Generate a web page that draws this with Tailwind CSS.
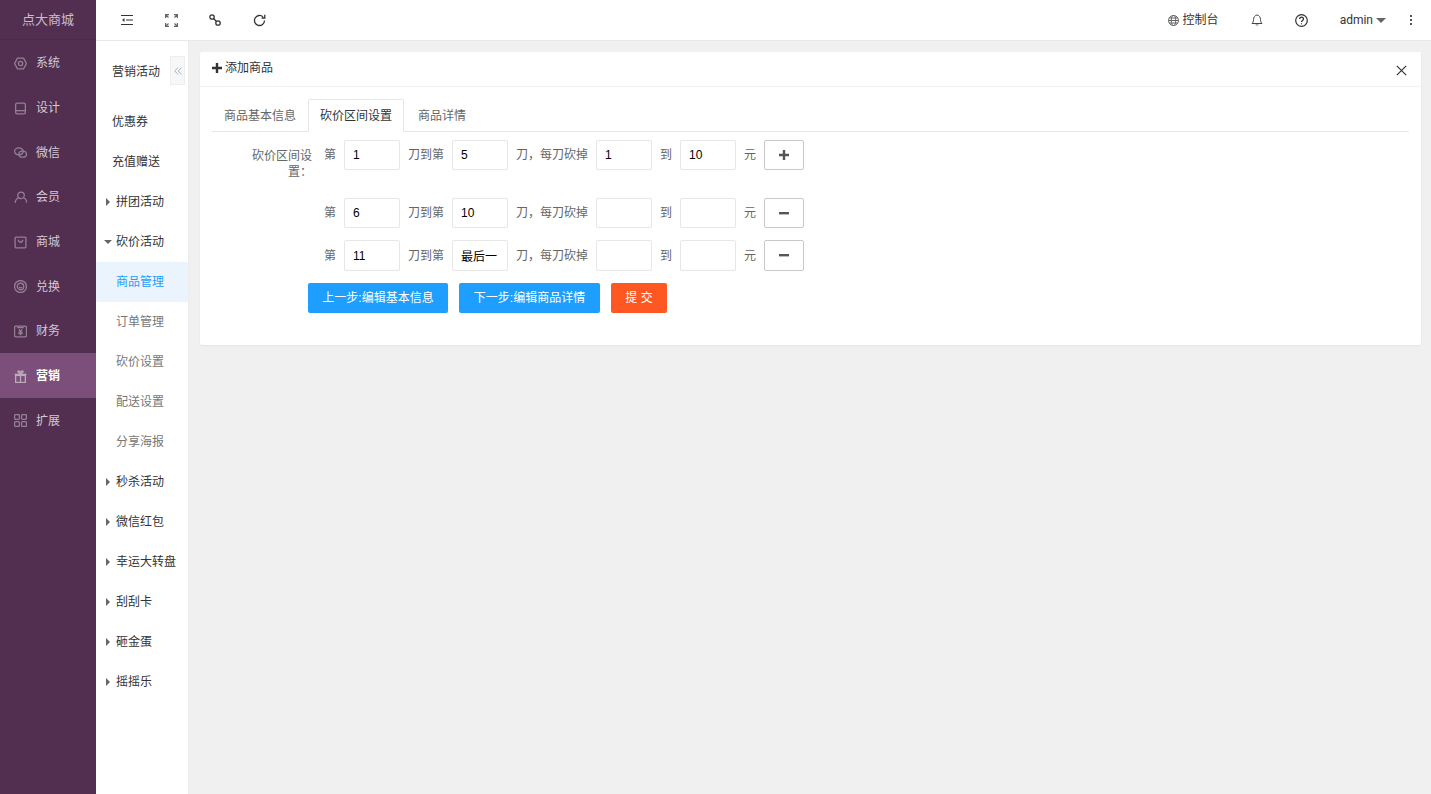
<!DOCTYPE html>
<html lang="zh">
<head>
<meta charset="utf-8">
<script src="https://cdn.jsdelivr.net/npm/@tailwindcss/browser@4"></script>
<title>添加商品</title>
</head>
<body class="h-[794px] overflow-hidden bg-[#f0f0f0] text-xs text-[#333] font-['Liberation_Sans','Noto_Sans_CJK_SC',sans-serif]">
<div class="flex h-[794px]">

  <!-- main menu -->
  <aside class="w-[96px] shrink-0 bg-[#522f51] text-[#d3c9d3]">
    <div class="h-10 flex items-center justify-center text-[13px] text-[#c9bdc9] border-b border-[#4a2a49]">点大商城</div>
    <a class="h-[44.7px] flex items-center pt-[2px] pl-[14px] gap-[9px]">
      <svg class="w-[13px] h-[13px]" viewBox="0 0 12 12" fill="none" stroke="#938093" stroke-width="1.200"><path d="M3.200 1h5.600L11.500 6 8.800 11H3.200L.5 6z"/><circle cx="6" cy="6" r="2"/></svg>
      <span>系统</span>
    </a>
    <a class="h-[44.7px] flex items-center pt-[2px] pl-[14px] gap-[9px]">
      <svg class="w-[13px] h-[13px]" viewBox="0 0 12 12" fill="none" stroke="#938093" stroke-width="1.200"><rect x="1.500" y="1" width="9" height="10" rx="1.500"/><path d="M1.500 8h9"/></svg>
      <span>设计</span>
    </a>
    <a class="h-[44.7px] flex items-center pt-[2px] pl-[14px] gap-[9px]">
      <svg class="w-[13px] h-[13px]" viewBox="0 0 12 12" fill="none" stroke="#938093" stroke-width="1.200"><ellipse cx="4.500" cy="5" rx="4" ry="3.200"/><ellipse cx="8" cy="7.500" rx="3.500" ry="2.800"/></svg>
      <span>微信</span>
    </a>
    <a class="h-[44.7px] flex items-center pt-[2px] pl-[14px] gap-[9px]">
      <svg class="w-[13px] h-[13px]" viewBox="0 0 12 12" fill="none" stroke="#938093" stroke-width="1.200"><circle cx="6.500" cy="4" r="3"/><path d="M1 11c.5-3 2-4.500 3.500-5M12 11c-.5-3-2-4.500-3.500-5"/></svg>
      <span>会员</span>
    </a>
    <a class="h-[44.7px] flex items-center pt-[2px] pl-[14px] gap-[9px]">
      <svg class="w-[13px] h-[13px]" viewBox="0 0 12 12" fill="none" stroke="#938093" stroke-width="1.200"><rect x="1" y="1" width="10" height="10" rx="1"/><path d="M4 3.500c0 3 4 3 4 0"/></svg>
      <span>商城</span>
    </a>
    <a class="h-[44.7px] flex items-center pt-[2px] pl-[14px] gap-[9px]">
      <svg class="w-[13px] h-[13px]" viewBox="0 0 12 12" fill="none" stroke="#938093" stroke-width="1.200"><circle cx="6" cy="6" r="5.500"/><circle cx="6" cy="6" r="3"/><path d="M4.500 6.500c.8.8 2.200.8 3 0"/></svg>
      <span>兑换</span>
    </a>
    <a class="h-[44.7px] flex items-center pt-[2px] pl-[14px] gap-[9px]">
      <svg class="w-[13px] h-[13px]" viewBox="0 0 12 12" fill="none" stroke="#938093" stroke-width="1.200"><rect x=".5" y="1" width="11" height="10" rx="1.500"/><path d="M3 2.500h6M4.500 4L6 6l1.500-2M4 6.500h4M4 8h4M6 6v3.500"/></svg>
      <span>财务</span>
    </a>
    <a class="h-[44.7px] flex items-center pt-[2px] pl-[14px] gap-[9px] bg-[#7c4f7b] text-white font-bold">
      <svg class="w-[13px] h-[13px]" viewBox="0 0 12 12" fill="none" stroke="#bcaabc" stroke-width="1.200"><rect x="1.500" y="5" width="9" height="6.500"/><path d="M.5 4h11M6 3v8.500M6 3C4 3 3 1.500 4 1s2 1 2 2c0-1 1-2.500 2-2s0 2-2 2"/></svg>
      <span>营销</span>
    </a>
    <a class="h-[44.7px] flex items-center pt-[2px] pl-[14px] gap-[9px]">
      <svg class="w-[13px] h-[13px]" viewBox="0 0 12 12" fill="none" stroke="#938093" stroke-width="1.200"><rect x=".5" y=".5" width="4.500" height="4.500" rx="1"/><rect x="7" y=".5" width="4.500" height="4.500" rx="1"/><rect x=".5" y="7" width="4.500" height="4.500" rx="1"/><rect x="7" y="7" width="4.500" height="4.500" rx="1"/></svg>
      <span>扩展</span>
    </a>
  </aside>

  <div class="flex-1 min-w-0">
    <!-- top bar -->
    <header class="h-[41px] bg-white border-b border-[#e8e8e8] flex items-center text-[#333]">
      <button class="ml-[25px]">
        <svg class="w-[12px] h-[12px] block" viewBox="0 0 12 12" fill="none" stroke="#333"><path d="M0 1.500h12M5 6h7M0 10.500h12"/><path d="M3.500 4L1 6l2.500 2z" fill="#333" stroke="none"/></svg>
      </button>
      <button class="ml-[32px]">
        <svg class="w-[13px] h-[13px] block" viewBox="0 0 13 13" fill="none" stroke="#666" stroke-width="1.200"><path d="M.6 4V.6H4M9 .6h3.400V4M.6 9v3.400H4M9 12.400h3.400V9M1 1l2.500 2.500M12 1L9.500 3.500M1 12l2.500-2.500M12 12L9.500 9.500"/></svg>
      </button>
      <button class="ml-[31px]">
        <svg class="w-[12px] h-[12px] block" viewBox="0 0 12 12" fill="none" stroke="#333" stroke-width="1.300"><circle cx="3" cy="3" r="2.200"/><circle cx="9" cy="9" r="2.200"/><path d="M4.500 4.500l3 3"/></svg>
      </button>
      <button class="ml-[32px]">
        <svg class="w-[13px] h-[13px] block" viewBox="0 0 13 13" fill="none" stroke="#333" stroke-width="1.300"><path d="M11.500 6.500a5 5 0 1 1-1.500-3.600"/><path d="M11.800 .8v3.200H8.600" /></svg>
      </button>
      <div class="ml-auto flex items-center">
        <svg class="w-[11px] h-[11px]" viewBox="0 0 11 11" fill="none" stroke="#666"><circle cx="5.500" cy="5.500" r="5"/><ellipse cx="5.500" cy="5.500" rx="2.200" ry="5"/><path d="M.5 5.500h10M1 3h9M1 8h9"/></svg>
        <span class="ml-[4px]">控制台</span>
        <svg class="ml-[32px] w-[12px] h-[12px]" viewBox="0 0 12 12" fill="none" stroke="#444"><path d="M1 9.500h10c-1-1-1.500-2-1.500-4S8 1 6 1 2.500 3.500 2.500 5.500 2 8.500 1 9.500zM5 10.500c.5 1 1.500 1 2 0"/></svg>
        <svg class="ml-[32px] w-[13px] h-[13px]" viewBox="0 0 13 13" fill="none" stroke="#333" stroke-width="1.200"><circle cx="6.500" cy="6.500" r="5.800"/><path d="M4.700 5c0-2.500 3.800-2.500 3.800 0 0 1.500-2 1.500-2 3" stroke-width="1.300"/><path d="M6 9.300h1v1H6z" fill="#333" stroke="none"/></svg>
        <span class="ml-[32px] font-['Roboto',sans-serif]">admin</span>
        <span class="ml-[3px] w-0 h-0 border-x-[5px] border-x-transparent border-t-[5px] border-t-[#666]"></span>
        <span class="ml-[24px] mr-[19px] flex flex-col gap-[2px]">
          <i class="block w-[2px] h-[2px] bg-[#555]"></i>
          <i class="block w-[2px] h-[2px] bg-[#555]"></i>
          <i class="block w-[2px] h-[2px] bg-[#555]"></i>
        </span>
      </div>
    </header>

    <div class="flex h-[753px]">
      <!-- sub menu -->
      <nav class="w-[93px] shrink-0 bg-white border-r border-[#ececec]">
        <div class="h-[61px] flex items-center pl-4 relative">
          <span>营销活动</span>
          <span class="absolute left-[74px] top-[15px] w-[15px] h-[29px] bg-[#f5f7f9] border border-[#eceef0] flex items-center justify-center">
            <svg class="w-[8px] h-[8px]" viewBox="0 0 8 8" fill="none" stroke="#a9b7c6"><path d="M4 .5L.8 4 4 7.500M7.500 .5L4.300 4l3.200 3.500"/></svg>
          </span>
        </div>
        <a class="h-10 flex items-center pl-4">优惠券</a>
        <a class="h-10 flex items-center pl-4">充值赠送</a>
        <a class="h-10 flex items-center pl-[10px] gap-[6px]"><i class="w-0 h-0 border-y-[4px] border-y-transparent border-l-[4px] border-l-[#666]"></i>拼团活动</a>
        <a class="h-10 flex items-center pl-2 gap-1"><i class="w-0 h-0 border-x-[4px] border-x-transparent border-t-[4px] border-t-[#666]"></i>砍价活动</a>
        <a class="h-10 flex items-center pl-5 bg-[#ebf4fd] text-[#1e9fff]">商品管理</a>
        <a class="h-10 flex items-center pl-5 text-[#777]">订单管理</a>
        <a class="h-10 flex items-center pl-5 text-[#777]">砍价设置</a>
        <a class="h-10 flex items-center pl-5 text-[#777]">配送设置</a>
        <a class="h-10 flex items-center pl-5 text-[#777]">分享海报</a>
        <a class="h-10 flex items-center pl-[10px] gap-[6px]"><i class="w-0 h-0 border-y-[4px] border-y-transparent border-l-[4px] border-l-[#666]"></i>秒杀活动</a>
        <a class="h-10 flex items-center pl-[10px] gap-[6px]"><i class="w-0 h-0 border-y-[4px] border-y-transparent border-l-[4px] border-l-[#666]"></i>微信红包</a>
        <a class="h-10 flex items-center pl-[10px] gap-[6px]"><i class="w-0 h-0 border-y-[4px] border-y-transparent border-l-[4px] border-l-[#666]"></i>幸运大转盘</a>
        <a class="h-10 flex items-center pl-[10px] gap-[6px]"><i class="w-0 h-0 border-y-[4px] border-y-transparent border-l-[4px] border-l-[#666]"></i>刮刮卡</a>
        <a class="h-10 flex items-center pl-[10px] gap-[6px]"><i class="w-0 h-0 border-y-[4px] border-y-transparent border-l-[4px] border-l-[#666]"></i>砸金蛋</a>
        <a class="h-10 flex items-center pl-[10px] gap-[6px]"><i class="w-0 h-0 border-y-[4px] border-y-transparent border-l-[4px] border-l-[#666]"></i>摇摇乐</a>
      </nav>

      <!-- content -->
      <main class="flex-1 min-w-0 pt-[11px] pl-[11px] pr-[10px]">
        <section class="h-[293px] bg-white rounded-[2px] shadow-[0_1px_2px_rgba(0,0,0,0.05)]">
          <div class="h-[35px] border-b border-[#f3f3f3] flex items-center pl-3 pr-[14px]">
            <svg class="w-[10px] h-[10px] -mt-[2px]" viewBox="0 0 10 10" fill="#333"><path d="M3.800 0h2.400v3.800H10v2.400H6.200V10H3.800V6.200H0V3.800h3.800z"/></svg>
            <span class="ml-[3px] -mt-[3px]">添加商品</span>
            <svg class="ml-auto w-[11px] h-[11px] mt-[2px]" viewBox="0 0 11 11" fill="none" stroke="#333" stroke-width="1.200"><path d="M.8 .8l9.400 9.400M10.200 .8L.8 10.200"/></svg>
          </div>

          <div class="mx-3 mt-3 h-[33px] flex border-b border-[#e6e6e6] text-[#666]">
            <span class="w-[96px] h-[33px] flex items-center justify-center">商品基本信息</span>
            <span class="w-[96px] h-[33px] flex items-center justify-center text-[#333] bg-white border border-b-white border-[#e6e6e6] rounded-t-[2px]">砍价区间设置</span>
            <span class="w-[76px] h-[33px] flex items-center justify-center">商品详情</span>
          </div>

          <form class="pt-2 text-[#666]">
            <div class="flex items-start">
              <label class="ml-[52px] w-[60px] shrink-0 text-right leading-4 pt-[8px]">砍价区间设置：</label>
              <div class="ml-3 flex items-center gap-2 h-[30px]">
                <span>第</span>
                <input value="1" class="w-[56px] h-[30px] pl-[8px] border border-[#e6e6e6] rounded-[2px] text-black">
                <span>刀到第</span>
                <input value="5" class="w-[56px] h-[30px] pl-[8px] border border-[#e6e6e6] rounded-[2px] text-black">
                <span>刀，每刀砍掉</span>
                <input value="1" class="w-[56px] h-[30px] pl-[8px] border border-[#e6e6e6] rounded-[2px] text-black">
                <span>到</span>
                <input value="10" class="w-[56px] h-[30px] pl-[8px] border border-[#e6e6e6] rounded-[2px] text-black">
                <span>元</span>
                <button type="button" class="w-10 h-[30px] border border-[#c9c9c9] rounded-[2px] flex items-center justify-center">
                  <svg class="w-[10px] h-[10px]" viewBox="0 0 10 10" fill="#555"><path d="M3.800 0h2.400v3.800H10v2.400H6.200V10H3.800V6.200H0V3.800h3.800z"/></svg>
                </button>
              </div>
            </div>
            <div class="mt-[18px] ml-[124px] flex items-center gap-2 h-[30px]">
              <span>第</span>
              <input value="6" class="w-[56px] h-[30px] pl-[8px] border border-[#e6e6e6] rounded-[2px] text-black">
              <span>刀到第</span>
              <input value="10" class="w-[56px] h-[30px] pl-[8px] border border-[#e6e6e6] rounded-[2px] text-black">
              <span>刀，每刀砍掉</span>
              <input class="w-[56px] h-[30px] pl-[8px] border border-[#e6e6e6] rounded-[2px] text-black">
              <span>到</span>
              <input class="w-[56px] h-[30px] pl-[8px] border border-[#e6e6e6] rounded-[2px] text-black">
              <span>元</span>
              <button type="button" class="w-10 h-[30px] border border-[#c9c9c9] rounded-[2px] flex items-center justify-center">
                <svg class="w-[10px] h-[3px]" viewBox="0 0 10 3" fill="#555"><rect width="10" height="2.400"/></svg>
              </button>
            </div>
            <div class="mt-3 ml-[124px] flex items-center gap-2 h-[31px]">
              <span>第</span>
              <input value="11" class="w-[56px] h-[31px] pl-[8px] border border-[#e6e6e6] rounded-[2px] text-black">
              <span>刀到第</span>
              <input value="最后一" class="w-[56px] h-[31px] pl-[8px] border border-[#e6e6e6] rounded-[2px] text-black">
              <span>刀，每刀砍掉</span>
              <input class="w-[56px] h-[31px] pl-[8px] border border-[#e6e6e6] rounded-[2px] text-black">
              <span>到</span>
              <input class="w-[56px] h-[31px] pl-[8px] border border-[#e6e6e6] rounded-[2px] text-black">
              <span>元</span>
              <button type="button" class="w-10 h-[31px] border border-[#c9c9c9] rounded-[2px] flex items-center justify-center">
                <svg class="w-[10px] h-[3px]" viewBox="0 0 10 3" fill="#555"><rect width="10" height="2.400"/></svg>
              </button>
            </div>
            <div class="mt-3 ml-[108px] flex gap-[11px]">
              <button type="button" class="w-[140px] h-[30px] bg-[#1e9fff] text-white rounded-[2px]">上一步:编辑基本信息</button>
              <button type="button" class="w-[141px] h-[30px] bg-[#1e9fff] text-white rounded-[2px]">下一步:编辑商品详情</button>
              <button type="button" class="w-[56px] h-[30px] bg-[#ff5722] text-white rounded-[2px]">提 交</button>
            </div>
          </form>
        </section>
      </main>
    </div>
  </div>
</div>
</body>
</html>
